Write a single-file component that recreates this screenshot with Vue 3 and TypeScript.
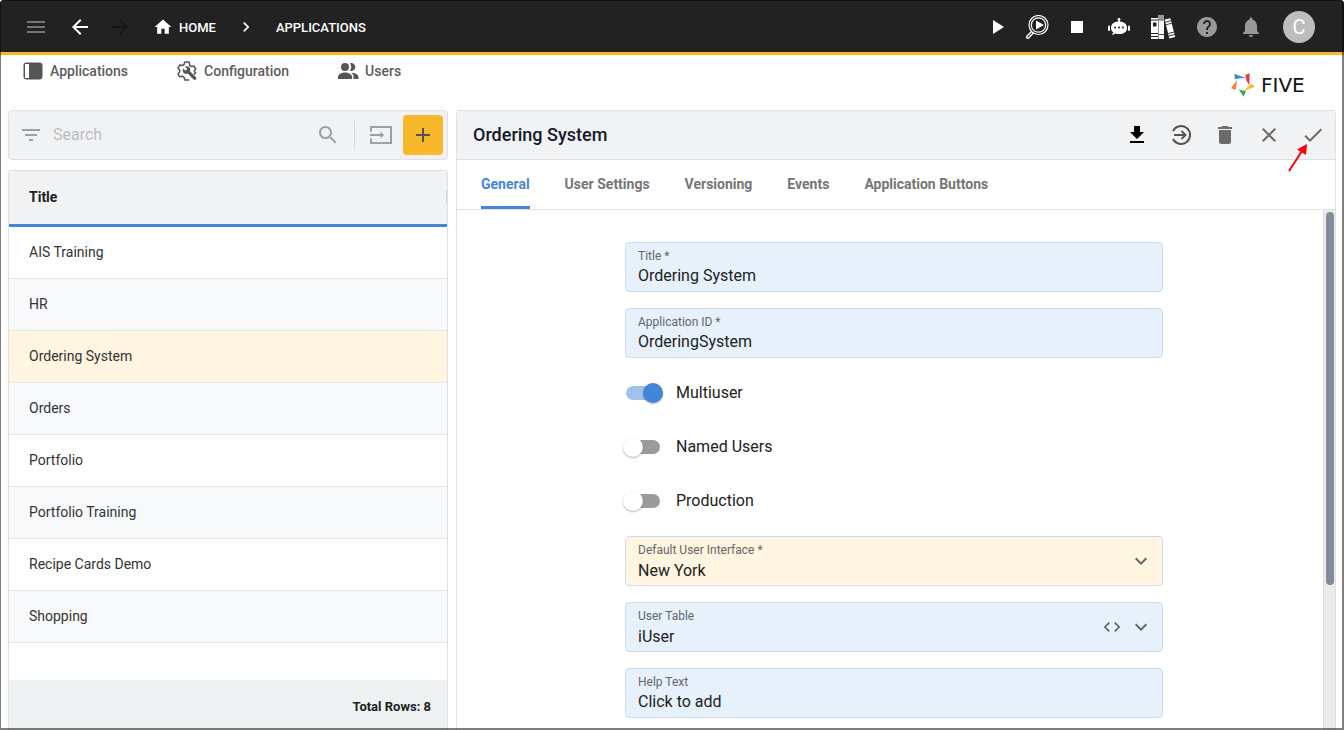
<script setup lang="ts">
import { ref } from 'vue'

interface Toggle {
  id: string
  label: string
  on: boolean
}

const apps: string[] = [
  'AIS Training',
  'HR',
  'Ordering System',
  'Orders',
  'Portfolio',
  'Portfolio Training',
  'Recipe Cards Demo',
  'Shopping',
]
const selected = ref('Ordering System')
const tabs: string[] = ['General', 'User Settings', 'Versioning', 'Events', 'Application Buttons']
const activeTab = ref('General')

const search = ref('')
const title = ref('Ordering System')
const appId = ref('OrderingSystem')
const ui = ref('New York')
const userTable = ref('iUser')
const helpText = ref('Click to add')
const toggles = ref<Toggle[]>([
  { id: 'multiuser', label: 'Multiuser', on: true },
  { id: 'named-users', label: 'Named Users', on: false },
  { id: 'production', label: 'Production', on: false },
])
</script>

<template>
  <div class="app">
    <header class="topbar">
      <button class="tb menu" aria-label="Menu">
        <svg width="24" height="24" viewBox="0 0 24 24" fill="#757575"><path d="M3 18h18v-2H3v2zm0-5h18v-2H3v2zm0-7v2h18V6H3z" /></svg>
      </button>
      <button class="tb" aria-label="Back">
        <svg width="24" height="24" viewBox="0 0 24 24" fill="#fff"><path d="M20 11H7.830l5.590-5.590L12 4l-8 8 8 8 1.410-1.410L7.830 13H20v-2z" /></svg>
      </button>
      <button class="tb" aria-label="Forward">
        <svg width="24" height="24" viewBox="0 0 24 24" fill="#171717"><path d="M12 4l-1.410 1.410L16.170 11H4v2h12.170l-5.580 5.590L12 20l8-8z" /></svg>
      </button>
      <nav class="crumbs" aria-label="Breadcrumb">
        <a href="#home">
          <svg width="20" height="20" viewBox="0 0 24 24" fill="#fff"><path d="M10 20v-6h4v6h5v-8h3L12 3 2 12h3v8z" /></svg>
          HOME
        </a>
        <svg width="20" height="20" viewBox="0 0 24 24" fill="#fff"><path d="M10 6L8.590 7.410 13.170 12l-4.580 4.590L10 18l6-6z" /></svg>
        <a href="#applications">APPLICATIONS</a>
      </nav>
      <div class="actions">
        <button class="tb" aria-label="Run">
          <svg width="24" height="24" viewBox="0 0 24 24" fill="#fff"><path d="M8 5v14l11-7z" /></svg>
        </button>
        <button class="tb" aria-label="Inspect">
          <svg width="24" height="24" viewBox="0 0 24 24" fill="none" stroke="#fff">
            <circle cx="13.5" cy="10" r="9.5" stroke-width="1.2" />
            <circle cx="13.5" cy="10" r="7.2" stroke-width="1.2" />
            <path d="M6.5 16.5L2 21.2q-1 1.6.4 2 1 .3 2-.9L8.300 18" stroke-width="1.3" />
            <path d="M11 5.500v9l8-4.500z" fill="#fff" stroke="none" />
          </svg>
        </button>
        <button class="tb" aria-label="Stop">
          <svg width="24" height="24" viewBox="0 0 24 24" fill="#fff"><path d="M6 6h12v12H6z" /></svg>
        </button>
        <button class="tb wide" aria-label="Assistant">
          <svg width="24" height="24" viewBox="0 0 24 24" fill="#fff">
            <path d="M12 3a1.400 1.400 0 0 1 .8 2.600v1C16.500 6.900 20 8.700 20 13c0 4.300-3.500 6-8 6-1.300 0-2.500-.1-3.500-.5L4.800 20.300l1.500-3C4.800 16.300 4 15 4 13c0-4.300 3.500-6.100 7.200-6.400v-1A1.400 1.400 0 0 1 12 3z" />
            <rect x="1" y="10.500" width="2" height="5.500" rx="1" />
            <rect x="21" y="10.500" width="2" height="5.500" rx="1" />
            <circle cx="8" cy="12.500" r="1" fill="#222" /><circle cx="12" cy="12.500" r="1" fill="#222" /><circle cx="16" cy="12.500" r="1" fill="#222" />
          </svg>
        </button>
        <button class="tb wide" aria-label="Library">
          <svg width="26" height="26" viewBox="0 0 26 26" fill="#fff">
            <path d="M1 4h7v21H1z" />
            <path d="M1 6h7M1 19.500h7M1 22.500h7" stroke="#222" stroke-width="1" />
            <path d="M3 8.500h3.500v4H3z" fill="#222" />
            <path d="M8.500 1h5.500v24H8.500z" />
            <path d="M8.500 1h5.500v4.500H8.500z" fill="#999" />
            <path d="M8.500 20.500h5.500M8.500 6h5.500" stroke="#222" stroke-width=".8" />
            <path d="M14.600 5.600l5.800-1.300 4.800 18.600-5.800 1.700z" />
            <path d="M15.200 8.200l5.800-1.400M15.900 10.700l5.800-1.400M18.200 19.500l5.800-1.500M18.800 22l5.900-1.600" stroke="#222" stroke-width=".9" />
          </svg>
        </button>
        <button class="tb wide" aria-label="Help">
          <svg width="24" height="24" viewBox="0 0 24 24" fill="#999"><path d="M12 2C6.480 2 2 6.480 2 12s4.480 10 10 10 10-4.480 10-10S17.520 2 12 2zm1 17h-2v-2h2v2zm2.070-7.750l-.9.920C13.450 12.900 13 13.500 13 15h-2v-.5c0-1.100.45-2.100 1.170-2.830l1.240-1.260c.37-.36.590-.860.590-1.410 0-1.100-.9-2-2-2s-2 .9-2 2H8c0-2.210 1.790-4 4-4s4 1.790 4 4c0 .88-.36 1.680-.93 2.250z" /></svg>
        </button>
        <button class="tb wide" aria-label="Notifications">
          <svg width="24" height="24" viewBox="0 0 24 24" fill="#999"><path d="M12 22c1.100 0 2-.9 2-2h-4c0 1.100.89 2 2 2zm6-6v-5c0-3.070-1.640-5.640-4.500-6.320V4c0-.83-.67-1.500-1.500-1.500s-1.500.67-1.500 1.500v.68C7.630 5.360 6 7.920 6 11v5l-2 2v1h16v-1l-2-2z" /></svg>
        </button>
        <button class="avatar" aria-label="Account">C</button>
      </div>
    </header>

    <div class="subbar">
      <nav class="sections" aria-label="Sections">
        <a href="#apps">
          <svg width="22" height="22" viewBox="0 0 22 22">
            <rect x="2" y="3" width="18" height="16" rx="2" fill="#555" stroke="#555" />
            <path d="M3 4h4v14H3z" fill="#fff" />
          </svg>
          Applications
        </a>
        <a href="#configuration">
          <svg width="22" height="22" viewBox="0 0 22 22" fill="none" stroke="#555" stroke-width="1.500">
            <path d="M18 14.500l1.600-1.600-1.400-1.900 1.500-2-1.800-3-2.500.5-1.600-1L13.200 2H8.800L8 4.500l-1.700 1-2.500-.6L2 8.200 3.700 10v2L2 13.800l1.800 3 2.500-.6 1.700 1 .8 2.800h4.400" stroke-linejoin="round" />
            <path d="M7.200 8.400l2.300 2.300 1.800-1.800L9 6.600c2-.9 4.200 0 5 1.800.5 1.200.3 2.100 0 2.800l6 6c1.200 1.600-.8 3.600-2.400 2.400l-6-6c-1 .4-2 .4-3-.1-1.700-.9-2.400-3.200-1.400-5.100z" fill="#555" stroke="none" />
          </svg>
          Configuration
        </a>
        <a href="#users">
          <svg width="22" height="22" viewBox="0 0 22 22" fill="#555">
            <circle cx="8" cy="7" r="4" />
            <path d="M1 19v-2c0-3 4-4.500 7-4.500s7 1.500 7 4.500v2z" />
            <path d="M12.800 3.300a4 4 0 1 1 0 7.400 5.400 5.400 0 0 0 0-7.400z" />
            <path d="M15.500 12.700c3 .5 6 1.800 6 4.300v2h-5v-2c0-1.900-.4-3.100-1.900-4.300z" />
          </svg>
          Users
        </a>
      </nav>
      <div class="brand">
        <svg width="24" height="24" viewBox="0 0 72 72">
          <path d="M10 2l34 13-18 1-14 3z" fill="#4386d8" />
          <path d="M43 6l13-5-1 36-8-13z" fill="#e8373e" />
          <path d="M61 32l11 9-35 13 13-12z" fill="#f8b92a" />
          <path d="M23 49l13 4 9 0-7 18z" fill="#3aa655" />
          <path d="M18 20l-2 16-2 15-14-5z" fill="#f5812a" />
        </svg>
        <span>FIVE</span>
      </div>
    </div>

    <main class="main">
      <section class="list">
        <div class="search">
          <svg width="24" height="24" viewBox="0 0 24 24" fill="#9aa0a6"><path d="M10 18h4v-2h-4v2zM3 6v2h18V6H3zm3 7h12v-2H6v2z" /></svg>
          <input v-model="search" type="text" placeholder="Search" aria-label="Search" />
          <button class="plain" aria-label="Search applications">
            <svg width="24" height="24" viewBox="0 0 24 24" fill="#9aa0a6"><path d="M15.500 14h-.79l-.28-.27C15.410 12.590 16 11.110 16 9.500 16 5.910 13.090 3 9.500 3S3 5.910 3 9.500 5.910 16 9.500 16c1.610 0 3.090-.59 4.230-1.570l.27.28v.79l5 4.990L20.490 19l-4.990-5zm-6 0C7.010 14 5 11.990 5 9.500S7.010 5 9.500 5 14 7.010 14 9.500 11.990 14 9.500 14z" /></svg>
          </button>
          <span class="rule"></span>
          <button class="plain" aria-label="Import">
            <svg width="24" height="24" viewBox="0 0 24 24" fill="none" stroke="#9aa0a6" stroke-width="2">
              <path d="M2 8.500V4h20v16H2v-4.500M1 12h11" />
              <path d="M11.500 8.500v7L15 12z" fill="#9aa0a6" stroke="none" />
            </svg>
          </button>
          <button class="add" aria-label="Add">
            <svg width="24" height="24" viewBox="0 0 24 24" fill="#555"><path d="M19 13h-6v6h-2v-6H5v-2h6V5h2v6h6v2z" /></svg>
          </button>
        </div>
        <div class="grid">
          <table>
            <thead>
              <tr><th scope="col"><div class="th">Title<i></i></div></th></tr>
            </thead>
            <tbody>
              <tr v-for="app in apps" :key="app" :class="{ selected: app === selected }" @click="selected = app">
                <td>{{ app }}</td>
              </tr>
            </tbody>
          </table>
          <div class="total">Total Rows: {{ apps.length }}</div>
        </div>
      </section>

      <section class="detail">
        <div class="bar">
          <h1>Ordering System</h1>
          <button class="tb wide" aria-label="Download">
            <svg width="24" height="24" viewBox="0 0 24 24" fill="#000"><path d="M19 9h-4V3H9v6H5l7 7 7-7zM5 18v2h14v-2H5z" /></svg>
          </button>
          <button class="tb wide" aria-label="Open">
            <svg width="24" height="24" viewBox="0 0 24 24" fill="none" stroke="#555" stroke-width="2">
              <path d="M4 8a9 9 0 1 1 0 8M5 12h11M12.500 8l4 4-4 4" />
            </svg>
          </button>
          <button class="tb wide" aria-label="Delete">
            <svg width="24" height="24" viewBox="0 0 24 24" fill="#6b6b6b"><path d="M6 19c0 1.100.9 2 2 2h8c1.100 0 2-.9 2-2V7H6v12zM19 4h-3.500l-1-1h-5l-1 1H5v2h14V4z" /></svg>
          </button>
          <button class="tb wide" aria-label="Cancel">
            <svg width="24" height="24" viewBox="0 0 24 24" fill="#6b6b6b"><path d="M19 6.410L17.590 5 12 10.590 6.410 5 5 6.410 10.590 12 5 17.590 6.410 19 12 13.410 17.590 19 19 17.590 13.410 12z" /></svg>
          </button>
          <button class="tb wide" aria-label="Save">
            <svg width="24" height="24" viewBox="0 0 24 24" fill="#6b6b6b"><path d="M9 16.170L4.830 12l-1.420 1.410L9 19 21 7l-1.410-1.410z" /></svg>
          </button>
          <svg class="pointer" width="21" height="30" viewBox="0 0 21 30">
            <path d="M2 29L15 9" stroke="#fb0007" stroke-width="2" />
            <path d="M20 2L10 7.500l9 5.500z" fill="#fb0007" />
          </svg>
        </div>
        <div class="tabs" role="tablist">
          <button
            v-for="tab in tabs"
            :key="tab"
            role="tab"
            :aria-selected="tab === activeTab"
            :class="{ active: tab === activeTab }"
            @click="activeTab = tab"
          >{{ tab }}</button>
        </div>
        <div class="body">
          <div class="scroll">
            <form class="form" @submit.prevent>
              <div class="field">
                <div class="text"><label for="title">Title *</label><input id="title" v-model="title" type="text" /></div>
              </div>
              <div class="field">
                <div class="text"><label for="app-id">Application ID *</label><input id="app-id" v-model="appId" type="text" /></div>
              </div>
              <div v-for="t in toggles" :key="t.id" class="toggle">
                <input :id="t.id" v-model="t.on" type="checkbox" role="switch" />
                <label :for="t.id">{{ t.label }}</label>
              </div>
              <div class="field changed">
                <div class="text">
                  <label for="ui">Default User Interface *</label>
                  <select id="ui" v-model="ui"><option>New York</option></select>
                </div>
                <svg width="24" height="24" viewBox="0 0 24 24" fill="#666"><path d="M16.590 8.590L12 13.170 7.410 8.590 6 10l6 6 6-6z" /></svg>
              </div>
              <div class="field">
                <div class="text">
                  <label for="user-table">User Table</label>
                  <select id="user-table" v-model="userTable"><option>iUser</option></select>
                </div>
                <button class="plain" type="button" aria-label="Edit code">
                  <svg width="20" height="20" viewBox="0 0 24 24" fill="#666"><path d="M9.400 16.600L4.800 12l4.600-4.600L8 6l-6 6 6 6 1.400-1.400zm5.200 0l4.600-4.600-4.600-4.600L16 6l6 6-6 6-1.400-1.400z" /></svg>
                </button>
                <svg width="24" height="24" viewBox="0 0 24 24" fill="#666"><path d="M16.590 8.590L12 13.170 7.410 8.590 6 10l6 6 6-6z" /></svg>
              </div>
              <div class="field">
                <div class="text"><label for="help">Help Text</label><input id="help" v-model="helpText" type="text" /></div>
              </div>
            </form>
          </div>
          <div class="track"><div class="thumb"></div></div>
        </div>
      </section>
    </main>
  </div>
</template>

<style>
body {
  margin: 0;
}
</style>

<style scoped>
* {
  box-sizing: border-box;
}
.app {
  display: flex;
  flex-direction: column;
  height: 100vh;
  overflow: hidden;
  background: #fff;
  font-family: Roboto, "Liberation Sans", sans-serif;
  color: #212121;
}
.app::after {
  content: "";
  position: fixed;
  inset: 0;
  border: solid rgba(0, 0, 0, 0.5);
  border-width: 1px 2px 2px 1px;
  border-radius: 4px 4px 0 0;
  pointer-events: none;
}
svg {
  display: block;
  flex: none;
}
button,
input,
select {
  font: inherit;
  color: inherit;
  border: 0;
  padding: 0;
  margin: 0;
  background: none;
}
button {
  cursor: pointer;
}
a {
  color: inherit;
  text-decoration: none;
}

.topbar {
  flex: none;
  display: flex;
  align-items: center;
  height: 55px;
  padding: 2px 29px 0 16px;
  background: #222;
  border-bottom: 3px solid #fbb829;
  border-radius: 4px 4px 0 0;
}
.tb {
  flex: none;
  display: flex;
  align-items: center;
  justify-content: center;
  width: 40px;
  height: 44px;
}
.tb.wide {
  width: 44px;
}
.menu {
  margin-right: 4px;
}
.crumbs {
  display: flex;
  align-items: center;
  gap: 20px;
  margin-left: 13px;
  color: #fff;
  font-size: 13px;
  font-weight: 500;
}
.crumbs a {
  display: flex;
  align-items: center;
  gap: 6px;
}
.actions {
  display: flex;
  align-items: center;
  margin-left: auto;
}
.avatar {
  width: 32px;
  height: 32px;
  margin-left: 10px;
  border-radius: 50%;
  background: #bdbdbd;
  color: #fff;
  font-size: 20px;
}

.subbar {
  flex: none;
  display: flex;
  justify-content: space-between;
  height: 55px;
  padding: 5px 25px 0 22px;
}
.sections {
  display: flex;
  align-items: flex-start;
  gap: 48px;
  color: #5c5c5c;
  font-size: 14px;
  font-weight: 500;
}
.sections a {
  display: flex;
  align-items: center;
  gap: 6px;
}
.brand {
  display: flex;
  align-items: center;
  gap: 6px;
  min-width: 88px;
  color: #111;
  font-family: "DejaVu Sans", sans-serif;
  font-size: 20px;
}

.main {
  flex: 1;
  min-height: 0;
  display: grid;
  grid-template-columns: 1fr 2fr;
  gap: 8px;
  padding: 0 8px;
}
.list {
  display: flex;
  flex-direction: column;
  gap: 10px;
  min-height: 0;
}
.search {
  flex: none;
  display: flex;
  align-items: center;
  height: 50px;
  padding: 0 4px 0 10px;
  background: #f1f2f4;
  border: 1px solid #dfe0e2;
  border-radius: 4px;
}
.search input {
  flex: 1;
  min-width: 0;
  margin: 0 10px;
  padding-bottom: 2px;
  font-size: 16px;
  outline: 0;
}
.search input::placeholder {
  color: #bcbec1;
  opacity: 1;
}
.rule {
  width: 1px;
  height: 28px;
  margin: 0 14px;
  background: #d5d6d8;
}
.add {
  display: flex;
  align-items: center;
  justify-content: center;
  width: 40px;
  height: 40px;
  margin-left: 10px;
  border-radius: 4px;
  background: #f7b92b;
}
.grid {
  flex: 1;
  min-height: 0;
  display: flex;
  flex-direction: column;
  justify-content: space-between;
  border: 1px solid #dfe0e2;
  border-bottom: 0;
  border-radius: 4px 4px 0 0;
  overflow: hidden;
}
table {
  width: 100%;
  border-collapse: separate;
  border-spacing: 0;
}
th {
  padding: 0;
  background: #f1f2f4;
  border-bottom: 3px solid #4386d8;
  font-size: 14px;
  font-weight: 700;
  text-align: left;
}
.th {
  display: flex;
  align-items: center;
  justify-content: space-between;
  height: 53px;
  padding: 0 0 2px 20px;
}
.th i {
  width: 1px;
  height: 14px;
  background: #d5d6d8;
}
td {
  height: 52px;
  padding: 0 20px 2px;
  border-bottom: 1px solid #e4e5e6;
  font-size: 14px;
  color: #333;
}
tbody tr:nth-child(even) {
  background: #f8f9fb;
}
tbody tr.selected {
  background: #fff5e1;
}
.total {
  flex: none;
  height: 50px;
  padding: 2px 16px 0 0;
  background: #eef2f3;
  font-size: 13px;
  font-weight: 700;
  line-height: 50px;
  text-align: right;
}

.detail {
  display: flex;
  flex-direction: column;
  min-width: 0;
  min-height: 0;
  border: 1px solid #dfe0e2;
  border-bottom: 0;
  border-radius: 4px 4px 0 0;
}
.bar {
  position: relative;
  flex: none;
  display: flex;
  align-items: center;
  height: 49px;
  padding-left: 16px;
  background: #f1f2f4;
  border-bottom: 1px solid #dfe0e2;
}
h1 {
  flex: 1;
  margin: 0;
  padding-bottom: 2px;
  color: #14192b;
  font-size: 18px;
  font-weight: 500;
}
.pointer {
  position: absolute;
  top: 31px;
  right: 27px;
  pointer-events: none;
}
.tabs {
  flex: none;
  display: flex;
  gap: 35px;
  height: 50px;
  padding-left: 24px;
  border-bottom: 1px solid #dfe0e2;
}
.tabs button {
  padding-top: 1px;
  border-bottom: 3px solid transparent;
  color: #757575;
  font-size: 14px;
  font-weight: 700;
}
.tabs button.active {
  border-bottom-color: #4386d8;
  color: #4386d8;
}
.body {
  flex: 1;
  min-height: 0;
  display: flex;
}
.scroll {
  flex: 1;
  display: grid;
  grid-template-columns: 168fr 538fr 160fr;
  padding: 32px 0;
  overflow-y: auto;
  scrollbar-width: none;
}
.form {
  grid-column: 2;
  display: flex;
  flex-direction: column;
  gap: 16px;
}
.field {
  flex: none;
  display: flex;
  align-items: center;
  gap: 7px;
  height: 50px;
  padding: 0 9px 0 12px;
  background: #e7f1fc;
  border: 1px solid #cbdcec;
  border-radius: 4px;
}
.field.changed {
  background: #fff5e1;
}
.text {
  flex: 1;
  display: flex;
  flex-direction: column;
  align-self: flex-start;
  padding-top: 5px;
}
.text label {
  color: #666;
  font-size: 12px;
  line-height: 16px;
}
.text input,
.text select {
  width: 100%;
  height: 22px;
  font-size: 16px;
  outline: 0;
  appearance: none;
}
.text select {
  height: 24px;
}
.toggle {
  flex: none;
  display: flex;
  align-items: center;
  gap: 16px;
  height: 38px;
  padding-left: 1px;
  font-size: 16px;
}
.toggle label {
  padding-bottom: 2px;
}
.toggle input {
  position: relative;
  width: 34px;
  height: 14px;
  border-radius: 7px;
  background: #9b9b9b;
  appearance: none;
}
.toggle input::before {
  content: "";
  position: absolute;
  top: -3px;
  left: -3px;
  width: 20px;
  height: 20px;
  border-radius: 50%;
  background: #fff;
  box-shadow: 0 1px 2px rgba(0, 0, 0, 0.3);
}
.toggle input:checked {
  background: #a1c2ec;
}
.toggle input:checked::before {
  left: 17px;
  background: #4386d8;
}
.track {
  flex: none;
  width: 12px;
  padding-top: 2px;
  background: #ebebeb;
  border-left: 1px solid #dcdcdc;
}
.thumb {
  width: 8px;
  height: 72%;
  margin: 0 auto;
  border-radius: 4px;
  background: #838a9b;
}
</style>
